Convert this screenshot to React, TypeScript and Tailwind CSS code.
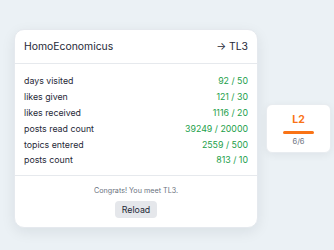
import React from "react";

const rows: [string, string][] = [
  ["days visited", "92 / 50"],
  ["likes given", "121 / 30"],
  ["likes received", "1116 / 20"],
  ["posts read count", "39249 / 20000"],
  ["topics entered", "2559 / 500"],
  ["posts count", "813 / 10"],
];

export default function App() {
  return (
    <div
      className="w-[334px] h-[250px] bg-[#ebf1f5] flex items-center pl-[14px] pt-[7px]"
      style={{ fontFamily: "Inter, 'Noto Sans', sans-serif" }}
    >
      <div className="w-[244px] bg-white rounded-[10px] shadow-[0_4px_14px_rgba(15,23,42,0.08)] border border-[#e5e9ee]">
        <div className="h-[34px] px-[9px] flex items-center justify-between border-b border-[#e6e9ed] text-[10.4px] text-[#1f2937]">
          <span>HomoEconomicus</span>
          <span>→ TL3</span>
        </div>
        <div className="px-[9px] pt-[9px] pb-[7px] border-b border-[#e6e9ed]">
          {rows.map(([k, v]) => (
            <div key={k} className="h-[15.8px] flex items-center justify-between text-[8.8px]">
              <span className="text-[#1f2937]">{k}</span>
              <span className="text-[#22a04a]">{v}</span>
            </div>
          ))}
        </div>
        <div className="flex flex-col items-center pt-[9px] pb-[9px]">
          <div className="text-[7.2px] text-[#6b7280] leading-[12px]">Congrats! You meet TL3.</div>
          <button className="mt-[4px] h-[17px] w-[42px] rounded-[4px] bg-[#e5e7eb] text-[8.8px] text-[#1f2937] leading-[17px]">
            Reload
          </button>
        </div>
      </div>
      <div className="ml-[8px] w-[65px] h-[49px] bg-white rounded-[6px] shadow-[0_2px_8px_rgba(15,23,42,0.06)] border border-[#e8ecf0] flex flex-col items-center pt-[8px]">
        <div className="text-[10.5px] font-bold text-[#f97316] leading-[13px]">L2</div>
        <div className="mt-[5px] w-[31px] h-[3px] rounded-full bg-[#f97316]" />
        <div className="mt-[3px] text-[7.5px] text-[#6b7280] leading-[10px]">6/6</div>
      </div>
    </div>
  );
}
